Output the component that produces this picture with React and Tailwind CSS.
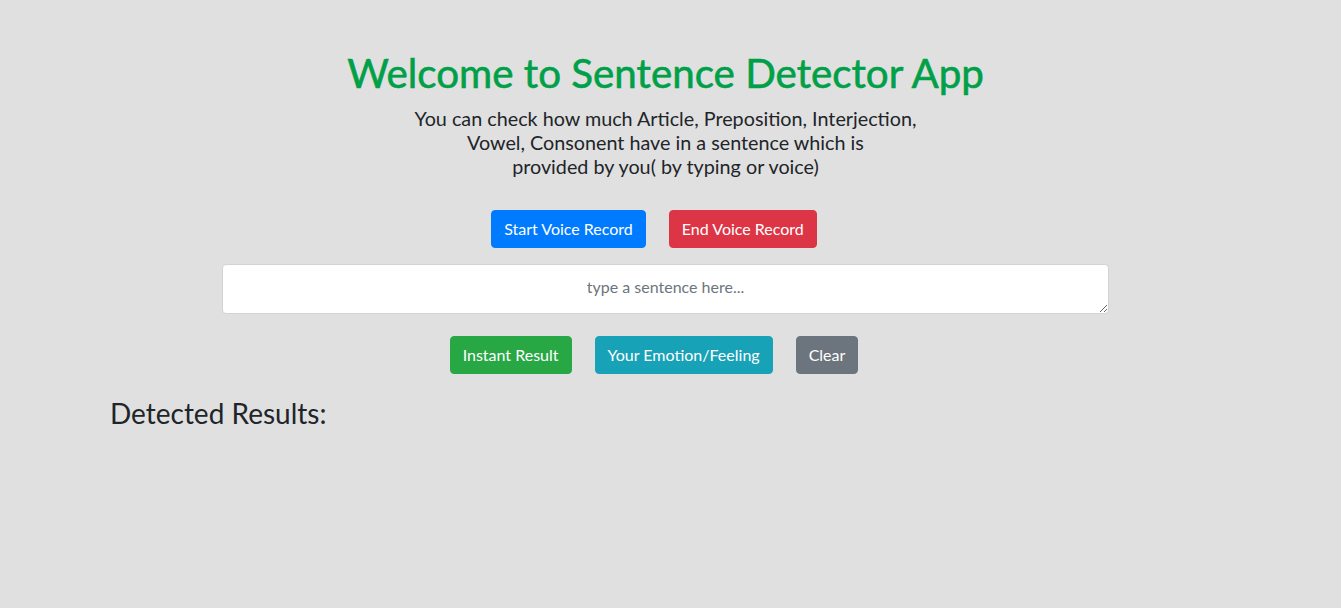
export default function App() {
  const font = { fontFamily: "Lato, 'Noto Sans', sans-serif" };
  return (
    <div className="min-h-[608px] w-full bg-[#e0e0e0] text-[#212529]" style={font}>
      <div className="flex flex-col items-center pr-[10px] pt-[49px]">
        <h1 className="text-[40.3px] leading-[1.2] font-normal text-[#00a048] [-webkit-text-stroke:0.6px_#00a048]">
          Welcome to Sentence Detector App
        </h1>
        <p className="mt-[10px] text-center text-[19.75px] leading-[24px]">
          You can check how much Article, Preposition, Interjection,
          <br />
          Vowel, Consonent have in a sentence which is
          <br />
          provided by you( by typing or voice)
        </p>
        <div className="mt-[31px] flex justify-center gap-[23px] pr-[23px]">
          <button className="rounded-[4px] border border-[#007bff] bg-[#007bff] px-3 py-[6px] text-base leading-6 text-white">
            Start Voice Record
          </button>
          <button className="rounded-[4px] border border-[#dc3545] bg-[#dc3545] px-3 py-[6px] text-base leading-6 text-white">
            End Voice Record
          </button>
        </div>
        <textarea
          className="mt-[16px] block h-[50px] w-[887px] resize-y rounded-[4px] border border-[#ced4da] bg-white px-3 pt-[10px] pb-[14px] text-center text-base leading-6 text-[#495057] outline-none placeholder:text-[#6c757d]"
          placeholder="type a sentence here..."
        />
        <div className="mt-[22px] flex justify-center gap-[23px] pr-[23px]">
          <button className="rounded-[4px] border border-[#28a745] bg-[#28a745] px-3 py-[6px] text-base leading-6 text-white">
            Instant Result
          </button>
          <button className="rounded-[4px] border border-[#17a2b8] bg-[#17a2b8] px-3 py-[6px] text-base leading-6 text-white">
            Your Emotion/Feeling
          </button>
          <button className="rounded-[4px] border border-[#6c757d] bg-[#6c757d] px-3 py-[6px] text-base leading-6 text-white">
            Clear
          </button>
        </div>
      </div>
      <div className="pl-[110px] pt-[23px]">
        <h3 className="text-[28px] leading-[1.2] font-normal">Detected Results:</h3>
      </div>
    </div>
  );
}
